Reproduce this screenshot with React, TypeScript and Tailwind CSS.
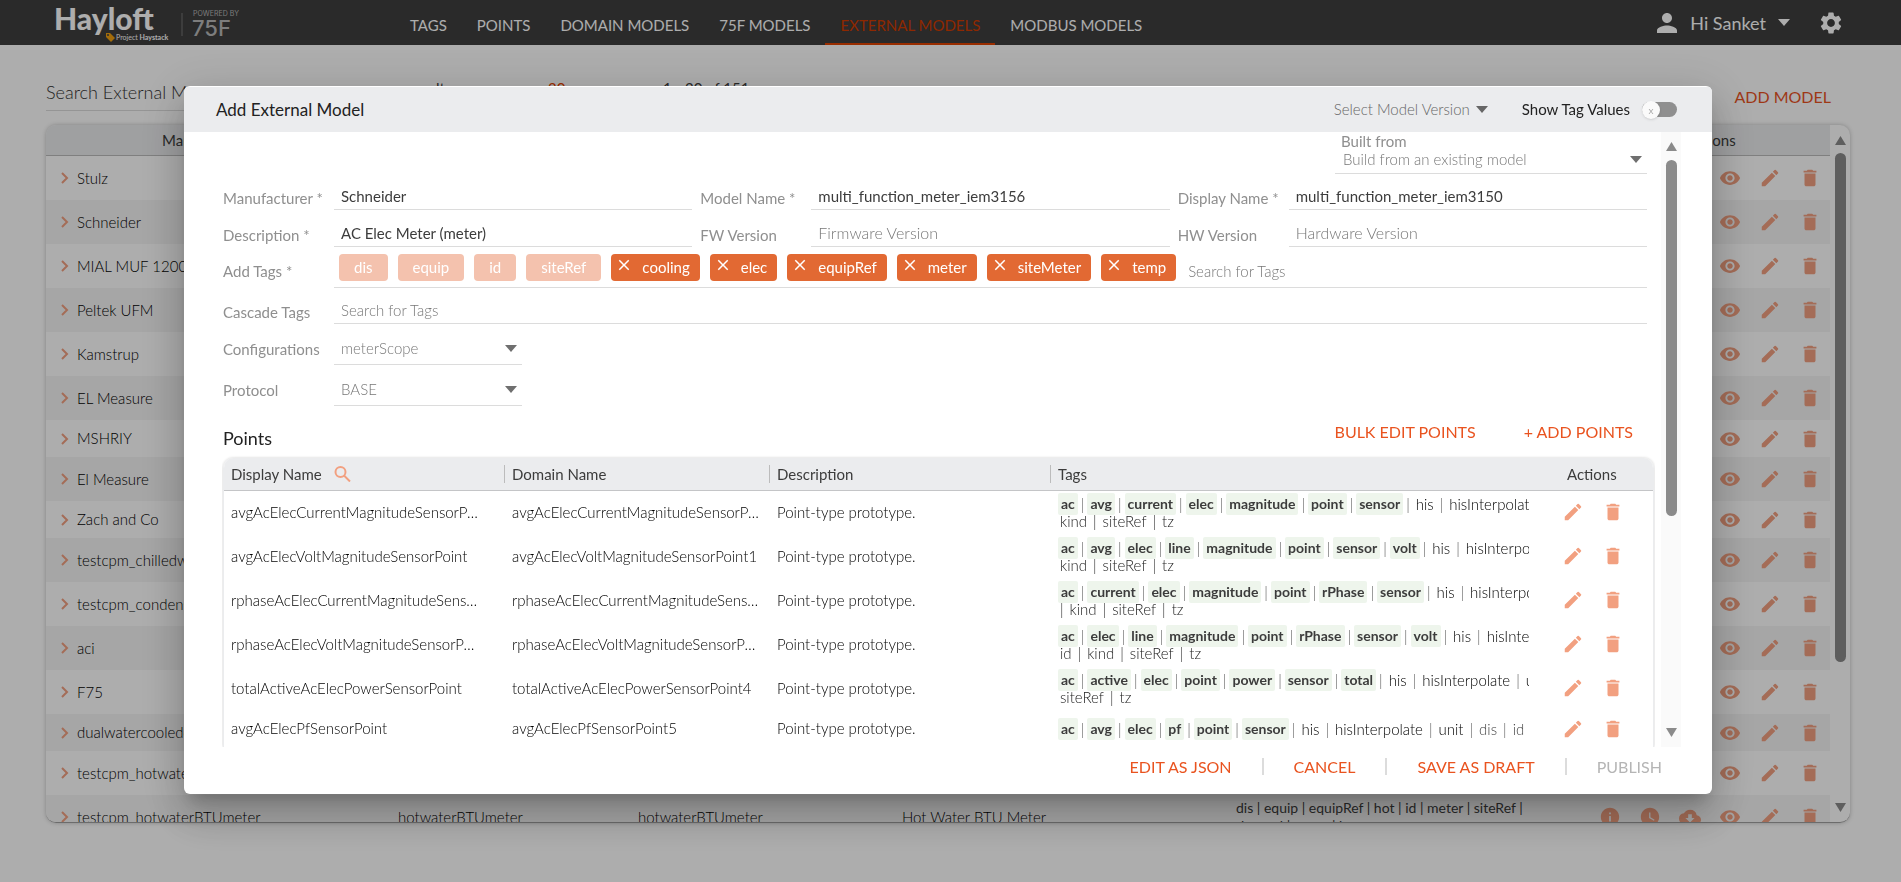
import { useState } from 'react';
import {
  MdClose,
  MdCloudDownload,
  MdDelete,
  MdEdit,
  MdInfo,
  MdPerson,
  MdSettings,
  MdVisibility,
  MdWatchLater,
} from 'react-icons/md';

const navItems = ['TAGS', 'POINTS', 'DOMAIN MODELS', '75F MODELS', 'EXTERNAL MODELS', 'MODBUS MODELS'];

interface ModelRow {
  manufacturer: string;
  short?: boolean;
  name?: string;
  domain?: string;
  description?: string;
  tags?: string;
}

const models: ModelRow[] = [
  { manufacturer: 'Stulz' },
  { manufacturer: 'Schneider' },
  { manufacturer: 'MIAL MUF 1200' },
  { manufacturer: 'Peltek UFM' },
  { manufacturer: 'Kamstrup' },
  { manufacturer: 'EL Measure' },
  { manufacturer: 'MSHRIY', short: true },
  { manufacturer: 'El Measure' },
  { manufacturer: 'Zach and Co', short: true },
  { manufacturer: 'testcpm_chilledwater' },
  { manufacturer: 'testcpm_condenser' },
  { manufacturer: 'aci' },
  { manufacturer: 'F75' },
  { manufacturer: 'dualwatercooledchiller', short: true },
  { manufacturer: 'testcpm_hotwater' },
  {
    manufacturer: 'testcpm_hotwaterBTUmeter',
    name: 'hotwaterBTUmeter',
    domain: 'hotwaterBTUmeter',
    description: 'Hot Water BTU Meter',
    tags: 'dis | equip | equipRef | hot | id | meter | siteRef | thermal | water | btu',
  },
];

interface PointRow {
  display: string;
  domain: string;
  marked: string[];
  plain: string[];
  muted?: string[];
  rest?: string[];
}

const points: PointRow[] = [
  {
    display: 'avgAcElecCurrentMagnitudeSensorPoint',
    domain: 'avgAcElecCurrentMagnitudeSensorPoint',
    marked: ['ac', 'avg', 'current', 'elec', 'magnitude', 'point', 'sensor'],
    plain: ['his', 'hisInterpolate'],
    rest: ['kind', '|', 'siteRef', '|', 'tz'],
  },
  {
    display: 'avgAcElecVoltMagnitudeSensorPoint',
    domain: 'avgAcElecVoltMagnitudeSensorPoint1',
    marked: ['ac', 'avg', 'elec', 'line', 'magnitude', 'point', 'sensor', 'volt'],
    plain: ['his', 'hisInterpolate'],
    rest: ['kind', '|', 'siteRef', '|', 'tz'],
  },
  {
    display: 'rphaseAcElecCurrentMagnitudeSensorPoint',
    domain: 'rphaseAcElecCurrentMagnitudeSensorPoint',
    marked: ['ac', 'current', 'elec', 'magnitude', 'point', 'rPhase', 'sensor'],
    plain: ['his', 'hisInterpolate'],
    rest: ['|', 'kind', '|', 'siteRef', '|', 'tz'],
  },
  {
    display: 'rphaseAcElecVoltMagnitudeSensorPoint',
    domain: 'rphaseAcElecVoltMagnitudeSensorPoint',
    marked: ['ac', 'elec', 'line', 'magnitude', 'point', 'rPhase', 'sensor', 'volt'],
    plain: ['his', 'hisInterpolate'],
    rest: ['id', '|', 'kind', '|', 'siteRef', '|', 'tz'],
  },
  {
    display: 'totalActiveAcElecPowerSensorPoint',
    domain: 'totalActiveAcElecPowerSensorPoint4',
    marked: ['ac', 'active', 'elec', 'point', 'power', 'sensor', 'total'],
    plain: ['his', 'hisInterpolate', 'unit'],
    rest: ['siteRef', '|', 'tz'],
  },
  {
    display: 'avgAcElecPfSensorPoint',
    domain: 'avgAcElecPfSensorPoint5',
    marked: ['ac', 'avg', 'elec', 'pf', 'point', 'sensor'],
    plain: ['his', 'hisInterpolate', 'unit'],
    muted: ['dis', 'id', 'kind'],
  },
];

function Logo() {
  return (
    <svg width="190" height="45" viewBox="0 0 190 45" role="img" aria-label="Hayloft, powered by 75F" fill="#fff">
      <text x="0" y="30" fontFamily="Lato" fontWeight="900" fontSize="30">Hayloft</text>
      <path d="M52 33h4l5 5-4 4-5-5z" fill="#f0a010" />
      <circle cx="54" cy="35" r="1" fill="#3e3e3e" />
      <text x="62" y="40" fontFamily="Lato" fontSize="7">
        Project <tspan fontWeight="700">Haystack</tspan>
      </text>
      <path d="M128 13v23" stroke="#777" />
      <text x="139" y="16" fontFamily="Inter" fontSize="7" fill="#b8b8b8">POWERED BY</text>
      <text x="138" y="36" fontFamily="Inter" fontWeight="500" fontSize="22" fill="#b8b8b8">75F</text>
    </svg>
  );
}

function Chevron() {
  return (
    <svg width="8" height="12" viewBox="0 0 8 12" className="mr-2 ml-[9px]" fill="none" stroke="#f2a080" strokeWidth="2" aria-hidden="true">
      <path d="M1 1l5 5-5 5" />
    </svg>
  );
}

function SearchIcon() {
  return (
    <svg width="17" height="16" viewBox="0 0 17 16" className="ml-3" fill="none" stroke="#f2a080" strokeWidth="2" aria-hidden="true">
      <circle cx="6.5" cy="6" r="5" />
      <path d="M10 9.5l6 6" />
    </svg>
  );
}

// scrollbar arrow
function Arrow({ up = false }: { up?: boolean }) {
  return (
    <svg width="11" height="9" viewBox="0 0 11 9" fill="#8b8b8b" aria-hidden="true">
      <path d={up ? 'M5.5 0L11 9H0z' : 'M5.5 9L11 0H0z'} />
    </svg>
  );
}

function Caret({ className = '' }: { className?: string }) {
  return (
    <svg width="12" height="7" viewBox="0 0 12 7" fill="currentColor" className={className} aria-hidden="true">
      <path d="M0 0h12L6 7z" />
    </svg>
  );
}

function Field({ id, label, value = '', placeholder }: { id: string; label: string; value?: string; placeholder?: string }) {
  return (
    <div className="flex items-end pr-2">
      <label htmlFor={id} className="w-[111px] shrink-0 pb-px text-[#8f8f8f]">{label}</label>
      <input
        id={id}
        defaultValue={value}
        placeholder={placeholder}
        className="h-8 min-w-0 flex-1 border-b border-[#dcdcdc] pt-1 pl-[7px] text-[#3c3c3c] outline-none placeholder:text-base placeholder:font-light placeholder:text-[#777]"
      />
    </div>
  );
}

function Tag({ name, className }: { name: string; className: string }) {
  return (
    <span className={`flex items-center gap-[3px] text-[15px] font-light ${className}`}>
      <span className="text-[#555]">|</span>
      <span className="px-[3px]">{name}</span>
    </span>
  );
}

function TagList({ row }: { row: PointRow }) {
  return (
    <div className="overflow-hidden whitespace-nowrap text-sm">
      <div className="flex h-[22px] items-center gap-[3px] leading-[22px]">
        {row.marked.map((tag, i) => (
          <span key={tag} className="flex items-center gap-[3px]">
            {i > 0 && <span className="text-[15px] font-light text-[#555]">|</span>}
            <span className="rounded-xs bg-[#eef5ec] px-[3px] font-bold text-[#3c3c3c]">{tag}</span>
          </span>
        ))}
        {row.plain.map(tag => <Tag key={tag} name={tag} className="text-black" />)}
        {row.muted?.map(tag => <Tag key={tag} name={tag} className="text-[#444]" />)}
      </div>
      {row.rest && (
        <div className="flex h-4 gap-[6px] pl-[2px] text-[15px] leading-3 font-light text-[#222]">
          {row.rest.map((part, i) => <span key={i}>{part}</span>)}
        </div>
      )}
    </div>
  );
}

export default function App() {
  const [tags, setTags] = useState(['cooling', 'elec', 'equipRef', 'meter', 'siteMeter', 'temp']);

  return (
    <div className="h-screen overflow-hidden bg-white font-['Lato',sans-serif] text-[#3c3c3c]">
      <header className="flex h-[45px] items-center bg-[#3e3e3e] pr-[57px] pl-[54px] text-white">
        <Logo />
        <nav className="ml-[151px] flex h-full text-[15px]">
          {navItems.map(item => (
            <a
              key={item}
              href="#"
              className={
                item === 'EXTERNAL MODELS'
                  ? 'flex h-full items-center border-b-2 border-[#e24301] px-[15px] pt-[7px] text-[#d13c00]'
                  : 'flex h-full items-center border-b-2 border-transparent px-[15px] pt-[7px]'
              }
            >
              {item}
            </a>
          ))}
        </nav>
        <button className="ml-auto flex items-center text-lg">
          <MdPerson size={30} className="mr-2" />
          Hi Sanket
          <Caret className="ml-3" />
        </button>
        <button aria-label="Settings" className="ml-7">
          <MdSettings size={26} />
        </button>
      </header>

      <main className="pr-[51px] pl-[46px]">
        <div className="flex h-20 items-start justify-between">
          <input
            aria-label="Search External Models"
            placeholder="Search External Models"
            className="mt-7 h-[38px] w-[320px] border-b border-[#dcdcdc] text-lg font-light outline-none placeholder:text-[#333]"
          />
          <p className="mt-8 mr-auto ml-[42px] flex text-[15px]">
            <span className="w-[140px]">results per page</span>
            <b className="w-[115px] font-normal text-[#e24301]">20</b>
            <span>1 - 20 of 151</span>
          </p>
          <button className="mt-10 mr-[19px] text-[#e9531f]">ADD MODEL</button>
        </div>

        <div className="flex h-[698px] overflow-hidden rounded-[10px] border-b border-[#a0a0a0] shadow-[0_0_4px_rgba(0,0,0,0.25)]">
          <table className="block flex-1 overflow-hidden">
            <thead className="block">
              <tr className="flex h-[31px] items-center border-b border-[#bcbcbc] bg-[#ebecee] text-[15px]">
                <th className="w-[352px] pl-[116px] text-left font-normal">Manufacturer</th>
                <th className="w-[240px] text-left font-normal">Model Name</th>
                <th className="w-[264px] text-left font-normal">Domain Name</th>
                <th className="flex-1 text-left font-normal">Description</th>
                <th className="w-[144px] text-left font-normal">Actions</th>
              </tr>
            </thead>
            <tbody className="block text-[15px] font-light text-black">
              {models.map(row => (
                <tr
                  key={row.manufacturer}
                  className={`flex items-center even:bg-[#f5f5f5] ${row.short ? 'h-[37px]' : 'h-11'}`}
                >
                  <td className="flex w-[352px] items-center pl-[6px]">
                    <Chevron />
                    {row.manufacturer}
                  </td>
                  <td className="w-[240px]">{row.name}</td>
                  <td className="w-[264px]">{row.domain}</td>
                  <td className="flex-1">{row.description}</td>
                  <td className="w-[300px] pr-2 text-sm leading-[18px] font-normal text-[#3c3c3c]">{row.tags}</td>
                  <td className="flex w-[294px] justify-end gap-[18px] pr-[9px] text-[#f2a080]">
                    {row.tags && (
                      <>
                        <button aria-label="Info"><MdInfo size={22} /></button>
                        <button aria-label="History"><MdWatchLater size={22} /></button>
                        <button aria-label="Download"><MdCloudDownload size={22} /></button>
                      </>
                    )}
                    <button aria-label="View"><MdVisibility size={22} /></button>
                    <button aria-label="Edit"><MdEdit size={22} /></button>
                    <button aria-label="Delete"><MdDelete size={22} /></button>
                  </td>
                </tr>
              ))}
            </tbody>
          </table>
          <div className="flex w-5 flex-col items-center pt-[11px] pb-[10px]">
            <Arrow up />
            <div className="mt-2 h-[509px] w-[11px] rounded-full bg-[#8b8b8b]" />
            <div className="mt-auto"><Arrow /></div>
          </div>
        </div>
      </main>

      <div className="fixed inset-0 flex bg-black/32 pt-[86px] pr-[189px] pb-[88px] pl-[184px]">
        <section
          role="dialog"
          aria-label="Add External Model"
          className="flex min-w-0 flex-1 flex-col overflow-hidden rounded-md bg-white pt-px text-[15px] shadow-[0_11px_15px_-7px_rgba(0,0,0,0.2),0_24px_38px_3px_rgba(0,0,0,0.14),0_9px_46px_8px_rgba(0,0,0,0.12)]"
        >
          <div className="flex h-[45px] shrink-0 items-center bg-[#ebecee] pr-[35px] pl-8 text-[#222]">
            <h1 className="mr-auto text-[17px]">Add External Model</h1>
            <button className="flex items-center gap-[6px] font-light text-[#666]">
              Select Model Version
              <Caret />
            </button>
            <label className="ml-[34px] flex items-center gap-3">
              Show Tag Values
              <input type="checkbox" className="peer sr-only" />
              <span className="flex h-[15px] w-[35px] items-center rounded-full bg-[#8f8f8f]">
                <span className="flex size-[18px] items-center justify-center rounded-full bg-[#fafafa] text-[10px] leading-none text-[#aaa] shadow">x</span>
              </span>
            </label>
          </div>

          <div className="flex min-h-0 flex-1 pr-[31px] pl-[38px]">
            <div className="min-w-0 flex-1 overflow-hidden pl-px">
              <div className="flex justify-end pr-2">
                <div className="w-[312px] border-b border-[#dcdcdc] pb-1">
                  <label htmlFor="built" className="block pl-[6px] leading-[18px] text-[#8f8f8f]">Built from</label>
                  <div className="flex items-center pr-[5px]">
                    <select id="built" className="h-[19px] flex-1 appearance-none pl-2 leading-[19px] font-light text-[#777]">
                      <option>Build from an existing model</option>
                    </select>
                    <Caret className="text-[#6f6f6f]" />
                  </div>
                </div>
              </div>

              <div className="grid grid-cols-3 gap-y-[5px] pt-1">
                <Field id="manufacturer" label="Manufacturer *" value="Schneider" />
                <Field id="model" label="Model Name *" value="multi_function_meter_iem3156" />
                <Field id="display" label="Display Name *" value="multi_function_meter_iem3150" />
                <Field id="description" label="Description *" value="AC Elec Meter (meter)" />
                <Field id="fw" label="FW Version" placeholder="Firmware Version" />
                <Field id="hw" label="HW Version" placeholder="Hardware Version" />
              </div>

              <div className="flex h-[41px] items-center pr-2">
                <label htmlFor="tags" className="w-[111px] pt-2 text-[#8f8f8f]">Add Tags *</label>
                <div className="flex h-full flex-1 items-center gap-[10px] border-b border-[#dcdcdc] pl-[5px]">
                  {['dis', 'equip', 'id', 'siteRef'].map(tag => (
                    <span key={tag} className="h-[27px] rounded bg-[#f4c2ae] px-[15px] leading-[27px] text-white">{tag}</span>
                  ))}
                  {tags.map(tag => (
                    <span key={tag} className="flex h-[27px] rounded bg-[#e26933] pt-[2px] pr-[10px] pl-1 text-white">
                      <button aria-label={`Remove ${tag}`} className="mr-[9px] flex h-5" onClick={() => setTags(tags.filter(t => t !== tag))}>
                        <MdClose size={18} />
                      </button>
                      {tag}
                    </span>
                  ))}
                  <input
                    id="tags"
                    placeholder="Search for Tags"
                    className="min-w-0 flex-1 pt-2 pl-[2px] outline-none placeholder:font-light placeholder:text-[#777]"
                  />
                </div>
              </div>

              <div className="flex items-end pt-1 pr-2">
                <label htmlFor="cascade" className="w-[111px] pb-px text-[#8f8f8f]">Cascade Tags</label>
                <input
                  id="cascade"
                  placeholder="Search for Tags"
                  className="h-8 flex-1 border-b border-[#dcdcdc] pt-1 pl-[7px] outline-none placeholder:font-light placeholder:text-[#777]"
                />
              </div>

              {[['Configurations', 'meterScope'], ['Protocol', 'BASE']].map(([label, value]) => (
                <div key={label} className="flex h-[41px] items-end">
                  <label htmlFor={label} className="w-[111px] pb-[5px] text-[#8f8f8f]">{label}</label>
                  <div className="flex h-8 w-[188px] items-center border-b border-[#dcdcdc] pr-[5px]">
                    <select id={label} className="flex-1 appearance-none pl-[7px] font-light text-[#777]">
                      <option>{value}</option>
                    </select>
                    <Caret className="text-[#6f6f6f]" />
                  </div>
                </div>
              ))}

              <div className="flex h-[52px] items-center pr-[22px] text-base text-[#e9531f]">
                <h2 className="mr-auto pt-3 text-lg text-[#222]">Points</h2>
                <button>BULK EDIT POINTS</button>
                <button className="ml-12">+ ADD POINTS</button>
              </div>

              <div className="mr-px overflow-hidden rounded-t-[10px] border-x border-[#ebecee] shadow-[0_0_3px_rgba(0,0,0,0.2)]">
                <table className="w-full table-fixed">
                  <colgroup>
                    <col className="w-[281px]" />
                    <col className="w-[265px]" />
                    <col className="w-[281px]" />
                    <col />
                    <col className="w-[124px]" />
                  </colgroup>
                  <thead>
                    <tr className="h-8 border-b border-[#c4c5c7] bg-[#ebecee] text-left">
                      <th className="pl-[7px] font-normal">
                        <span className="flex h-[18px] items-center border-r border-[#bcbcbc]">
                          Display Name
                          <SearchIcon />
                        </span>
                      </th>
                      <th className="pl-[7px] font-normal">
                        <span className="flex h-[18px] items-center border-r border-[#bcbcbc]">Domain Name</span>
                      </th>
                      <th className="pl-[7px] font-normal">
                        <span className="flex h-[18px] items-center border-r border-[#bcbcbc]">Description</span>
                      </th>
                      <th className="pl-[7px] font-normal">Tags</th>
                      <th className="pl-[38px] font-normal">Actions</th>
                    </tr>
                  </thead>
                  <tbody className="font-light text-black">
                    {points.map(row => (
                      <tr key={row.display} className={row.rest ? 'h-11' : 'h-[37px]'}>
                        <td className="truncate pr-[25px] pl-[7px]">{row.display}</td>
                        <td className="truncate pr-2 pl-[7px]">{row.domain}</td>
                        <td className="pl-[7px]">Point-type prototype.</td>
                        <td className="p-0 pl-[7px]"><TagList row={row} /></td>
                        <td className="pl-[33px] text-[#f2a080]">
                          <span className="flex gap-[18px]">
                            <button aria-label="Edit point"><MdEdit size={22} /></button>
                            <button aria-label="Delete point"><MdDelete size={22} /></button>
                          </span>
                        </td>
                      </tr>
                    ))}
                  </tbody>
                </table>
              </div>
            </div>

            <div className="ml-[6px] flex w-5 flex-col items-center bg-[#fafafa] pt-[10px] pb-[10px]">
              <Arrow up />
              <div className="mt-[9px] h-[356px] w-[11px] rounded-full bg-[#8b8b8b]" />
              <div className="mt-auto"><Arrow /></div>
            </div>
          </div>

          <div className="flex h-[47px] shrink-0 items-center justify-end pr-[50px] pb-2 text-base text-[#e9531f]">
            <button>EDIT AS JSON</button>
            <span className="mx-[30px] h-[17px] w-[2px] bg-[#dcdcdc]" />
            <button>CANCEL</button>
            <span className="mx-[30px] h-[17px] w-[2px] bg-[#dcdcdc]" />
            <button>SAVE AS DRAFT</button>
            <span className="mx-[30px] h-[17px] w-[2px] bg-[#dcdcdc]" />
            <button disabled className="text-[#b5b5b5]">PUBLISH</button>
          </div>
        </section>
      </div>
    </div>
  );
}
